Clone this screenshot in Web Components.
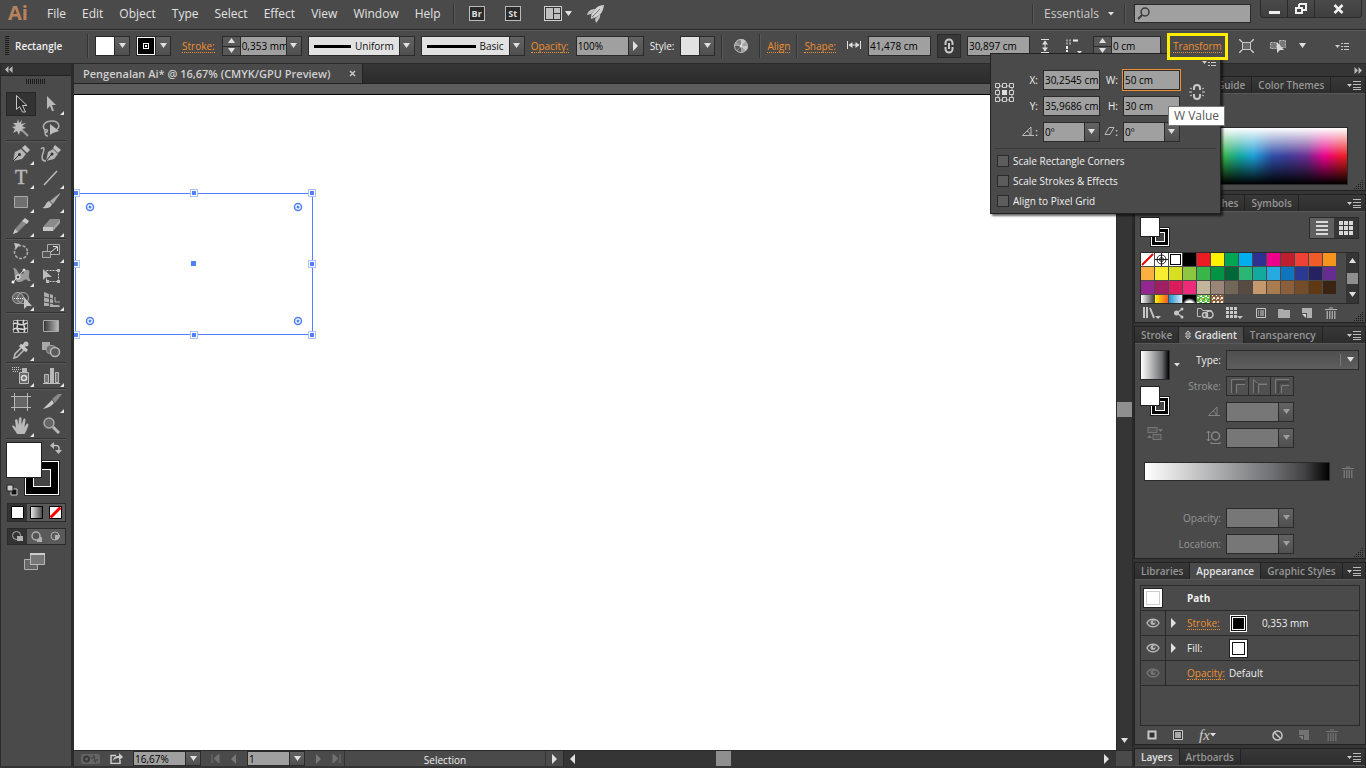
<!DOCTYPE html>
<html lang="en">
<head>
<meta charset="utf-8">
<title>Pengenalan Ai</title>
<style>
    html, body{
        margin: 0;
        height: 100%;
    }
    body{
        --bg: #4a4a4a;
        --edge: #2a2a2a;
        --dark: #353535;
        --field: #a0a0a0;
        --accent: #ee8f30;
        overflow: hidden;
        background: var(--bg);
        color: #f0f0f0;
        font: 10px/14px "Open Sans", "Noto Sans", sans-serif;
    }
</style>
</head>
<body>
<ai-app></ai-app>

<script>
const FLY = '<path d="M28 19v4h-4z" fill="#e6e6e6"/>';

// every icon is [width, height, markup]
const icons = {
    down: [9, 6, '<path d="M1 0h7l-3.500 5z" fill="#e0e0e0"/>'],
    downSmall: [6, 4, '<path d="M0 0h6l-3 3.500z" fill="#e0e0e0"/>'],
    up: [9, 6, '<path d="M1 5h7l-3.500-5z" fill="#e0e0e0"/>'],
    left: [7, 10, '<path d="M6 0v10l-5-5z" fill="#e0e0e0"/>'],
    right: [7, 10, '<path d="M1 0v10l5-5z" fill="#e0e0e0"/>'],
    first: [9, 9, '<path d="M1 0v9M8 0v9l-5-4.500z" fill="#707070" stroke="#707070"/>'],
    last: [9, 9, '<path d="M8 0v9M1 0v9l5-4.500z" fill="#707070" stroke="#707070"/>'],
    menu: [14, 9, '<path d="M0 3h5l-2.500 3z" fill="#ccc"/><path d="M6 .5h8M6 3.500h8M6 6.500h8M6 8.500h8" stroke="#b8b8b8"/>'],
    menuDots: [14, 9, '<path d="M0 3h5l-2.500 3z" fill="#ccc"/><path d="M6 1.500h2M9 1.500h5M6 4.500h2M9 4.500h5M6 7.500h2M9 7.500h5" stroke="#c8c8c8"/>'],
    collapseLeft: [8, 7, '<path d="M3.500 0v7L0 3.500zM7.500 0v7L4 3.500z" fill="#bbb"/>'],
    collapseRight: [8, 7, '<path d="M.5 0v7L4 3.500zM4.500 0v7L8 3.500z" fill="#bbb"/>'],
    grip: [20, 5, '<path d="M0 2.500h20" stroke="#1d1d1d" stroke-width="5" stroke-dasharray="1 1"/>'],
    gripV: [4, 20, '<path d="M2 0v20" stroke="#1d1d1d" stroke-width="4" stroke-dasharray="1 1"/>'],
    resize: [10, 9, '<path d="M8.500 0v9M6.500 2v7M4.500 4v5M2.500 6v3M.5 8v1" stroke="#1a1a1a" stroke-dasharray="1 1"/>'],
    diamond: [6, 10, '<path d="M.5 4L3 1l2.500 3zM.5 6L3 9l2.500-3z" fill="none" stroke="#d0d0d0"/>'],
    close: [7, 7, '<path d="M1 1l5 5M6 1l-5 5" stroke="#c8c8c8" stroke-width="1.500"/>'],

    arrange: [18, 15, '<rect x=".5" y=".5" width="17" height="14" fill="#333" stroke="#d0d0d0"/><path d="M2 2h7v11H2zM10 2h6v5h-6zM10 8h6v5h-6z" fill="#bfbfbf"/>'],
    rocket: [18, 18, '<path d="M17 0C11 0 7 4 4 10l3 3c6-2 9-6 10-13z" fill="#cfcfcf"/><path d="M8 4C4 4 1 6 0 10l4-1zM13 9c1 2-1 6-4 9l-1-4zM4 10l3 3-3 1z" fill="#c3c3c3"/><path d="M5 12L13 4" stroke="#777"/>'],
    search: [13, 13, '<circle cx="8" cy="5" r="4" fill="none" stroke="#3c3c3c" stroke-width="1.500"/><path d="M5 8L1 12" stroke="#3c3c3c" stroke-width="2"/>'],
    min: [11, 12, '<path d="M0 9.500h11" stroke="#eee" stroke-width="3"/>'],
    restore: [12, 12, '<path d="M4 1h7v6H8M4 1v3" fill="none" stroke="#eee" stroke-width="2"/><path d="M1 5h6v5H1z" fill="none" stroke="#eee" stroke-width="2"/>'],
    quit: [11, 12, '<path d="M1.500 2l8 8M9.500 2l-8 8" stroke="#f2f2f2" stroke-width="2.500"/>'],

    recolor: [14, 14, '<circle cx="7" cy="7" r="6.500" fill="#a0a0a0"/><path d="M7 7V0a7 7 0 0 1 5 2zM7 7h7a7 7 0 0 1-2 5z" fill="#cacaca"/><path d="M7 7L2 12a7 7 0 0 1-2-5zM7 7v7l-4-1.500z" fill="#5a5a5a"/><path d="M7 7L2 2A7 7 0 0 1 7 0z" fill="#858585"/><circle cx="7" cy="7" r="1.500" fill="#ddd"/><circle cx="7" cy="7" r="6.500" fill="none" stroke="#bdbdbd"/>'],
    width: [14, 10, '<path d="M.5 1v8M13.500 1v8M2 5h10" stroke="#ddd"/><path d="M1.500 5l4-3v6zM12.500 5l-4-3v6z" fill="#ddd"/>'],
    height: [8, 14, '<path d="M0 .5h8M0 13.500h8M4 2v10" stroke="#ddd"/><path d="M4 1.500l-3 4h6zM4 12.500l-3-4h6z" fill="#ddd"/>'],
    corner: [17, 15, '<path d="M1 1.500h6M1 4.500h6" stroke="#999" stroke-width="2" stroke-dasharray="2 1"/><path d="M8 1.500h5" stroke="#eee" stroke-width="2"/><path d="M2 7v6" stroke="#eee" stroke-width="2" stroke-dasharray="3 1"/><path d="M17 12h-5l2.500 3z" fill="#ddd"/>'],
    link: [10, 16, '<path d="M1.500 7V5a3.500 3.500 0 0 1 7 0v2M1.500 9v2a3.500 3.500 0 0 0 7 0V9" fill="none" stroke="#c9c9c9" stroke-width="2"/><path d="M5 5v6" stroke="#c9c9c9" stroke-width="2"/>'],
    unlink: [16, 18, '<path d="M5 7V5a3 3 0 0 1 6 0v2M5 11v2a3 3 0 0 0 6 0v-2" fill="none" stroke="#c9c9c9" stroke-width="2"/><path d="M0 9h3M13 9h3M1 5l2 1M15 5l-2 1M1 13l2-1M15 13l-2-1" stroke="#c9c9c9"/>'],
    isolate: [15, 14, '<rect x="3.500" y="3.500" width="8" height="7" fill="#666" stroke="#c8c8c8"/><path d="M0 0l3 3M15 0l-3 3M0 14l3-3M15 14l-3-3" stroke="#c8c8c8" stroke-width="1.500"/>'],
    similar: [17, 15, '<path d="M.5 3.500h6v6h-6zM9.500 1.500h6v7h-6z" fill="#777" stroke="#bbb" stroke-dasharray="2 1"/><path d="M7 3v11l3-3h4z" fill="#d8d8d8"/>'],
    refpoint: [20, 20, '<path d="M3 3h14v14H3z" fill="none" stroke="#ccc"/><g fill="#4a4a4a" stroke="#d0d0d0"><path d="M.5.5h4v4h-4zM7.500.5h4v4h-4zM14.500.5h4v4h-4zM.5 7.500h4v4h-4zM14.500 7.500h4v4h-4zM.5 14.500h4v4h-4zM7.500 14.500h4v4h-4zM14.500 14.500h4v4h-4z"/></g><path d="M7 7h5v5H7z" fill="#ddd"/>'],
    angle: [14, 10, '<path d="M13 9.500H1.500L10 1v8M6 5c2 1 3 2 3 4" fill="none" stroke="#bbb"/>'],
    shear: [11, 10, '<path d="M1 8.500L5 1.500h5L6 8.500z" fill="none" stroke="#bbb"/>'],
    aspect: [15, 14, '<path d="M2.500 1v10M.5 3l2-2 2 2M.5 9l2 2 2-2M5 13.500h9M5 12v2M14 12v2" fill="none" stroke="#888"/><ellipse cx="9.500" cy="6" rx="4" ry="4" fill="none" stroke="#888" stroke-width="1.500"/>'],

    library: [18, 12, '<path d="M1 0v11M4 0v11M7 1l4 10" stroke="#c4c4c4" stroke-width="2"/><path d="M12 9h6l-3 3z" fill="#c4c4c4"/>'],
    share: [12, 12, '<path d="M9 2L4 6l5 4" fill="none" stroke="#bbb" stroke-width="1.500"/><circle cx="3.500" cy="6" r="2.500" fill="#c4c4c4"/><circle cx="9" cy="2" r="1.500" fill="#c4c4c4"/><circle cx="9" cy="10" r="1.500" fill="#c4c4c4"/>'],
    ccFolder: [17, 12, '<path d="M4 9.500H.5v-8h4l1 2h9V5" fill="none" stroke="#bbb"/><circle cx="8" cy="8" r="2.500" fill="none" stroke="#c4c4c4" stroke-width="1.500"/><circle cx="12.500" cy="7.500" r="3.500" fill="none" stroke="#c4c4c4" stroke-width="1.500"/>'],
    kinds: [17, 12, '<path d="M0 1.500h11M0 5.500h11M0 9.500h11" stroke="#c8c8c8" stroke-width="3" stroke-dasharray="3 1"/><path d="M11 9h6l-3 3z" fill="#c4c4c4"/>'],
    options: [10, 12, '<path d="M.5 1.500h9v9h-9z" fill="none" stroke="#c4c4c4"/><path d="M2 4h1M4 4h4M2 6h1M4 6h4M2 8h1M4 8h4" stroke="#ccc"/>'],
    folder: [12, 10, '<path d="M0 1h5l1 1h6v8H0z" fill="#ababab"/>'],
    fresh: [11, 10, '<path d="M0 0h10v10H5V5H0z" fill="#b0b0b0"/><path d="M0 6h4v4z" fill="#d8d8d8"/>'],
    trash: [12, 12, '<path d="M0 2.500h12M4 1h4" stroke="#b0b0b0"/><path d="M1.500 4h9v8h-9z" fill="#a0a0a0"/><path d="M3.500 4v8M6 4v8M8.500 4v8" stroke="#444"/>'],
    listView: [12, 16, '<path d="M0 2h12M0 6h12M0 10h12M0 14h12" stroke="#d8d8d8" stroke-width="2"/>'],
    gridView: [15, 14, '<path d="M0 2h14M0 7h14M0 12h14" stroke="#d8d8d8" stroke-width="4" stroke-dasharray="4 1"/>'],
    reverse: [16, 13, '<rect x="1" y=".5" width="9" height="5" fill="#555" stroke="#777"/><rect x="6" y="7.500" width="8" height="5" fill="#555" stroke="#777"/><path d="M11 2h5l-2.500 3zM0 11h5l-2.500-3z" fill="#777"/>'],
    strokeWithin: [14, 14, '<path d="M.5 14V.5H14" fill="none" stroke="#777"/><path d="M3 14V3h11" fill="none" stroke="#444" stroke-width="3"/><path d="M5.500 14V5.500H14" fill="none" stroke="#7c7c7c"/>'],
    strokeAlong: [14, 14, '<path d="M.5 14V.5L5 5h9" fill="none" stroke="#777"/><path d="M3 14V4" stroke="#444" stroke-width="3"/><path d="M5.500 14V5.500H14" fill="none" stroke="#7c7c7c"/>'],
    strokeAcross: [14, 14, '<path d="M.5 14V.5H14M6.500 14V6.500H14" fill="none" stroke="#7a7a7a"/><path d="M3.500 14V3.500H14" fill="none" stroke="#3e3e3e" stroke-width="2"/>'],
    eye: [14, 10, '<path d="M1 5c2.500-5 9.500-5 12 0-2.500 5-9.500 5-12 0z" fill="none" stroke="#b5b5b5" stroke-width="1.500"/><circle cx="7" cy="4.500" r="2.500" fill="#b5b5b5"/><circle cx="8" cy="4" r="1" fill="#444"/>'],
    newStroke: [10, 10, '<path d="M1.500 1.500h7v7h-7z" fill="#333" stroke="#c8c8c8" stroke-width="2"/>'],
    newFill: [10, 10, '<path d="M.5.500h9v9h-9z" fill="#333" stroke="#c8c8c8"/><path d="M2 2h6v6H2z" fill="#aaa"/>'],
    clear: [11, 11, '<circle cx="5.500" cy="5.500" r="4.500" fill="none" stroke="#c8c8c8" stroke-width="1.500"/><path d="M2 2l7 7" stroke="#c8c8c8" stroke-width="1.500"/>'],
    sync: [19, 10, '<rect width="19" height="10" rx="2" fill="#646464"/><circle cx="5.500" cy="5" r="2.500" fill="none" stroke="#383838" stroke-width="2"/><path d="M10 4h4l-2-3M17 6h-4l2 3" fill="none" stroke="#383838"/>'],
    export: [13, 11, '<path d="M6 2.500H1v8h9V7" fill="none" stroke="#ccc" stroke-width="1.500"/><path d="M3 8c0-3 2-5 6-5V0l4 4-4 3.500V5C6 5 4 6 3 8z" fill="#ccc"/>'],

    // toolbox, drawn on the 30x24 cell
    selection: [30, 24, '<path d="M10.500 3.500v14l3-3 3 5.500h3l-3-6.500h4.500z" fill="#2d2d2d" stroke="#c4c4c4"/>'],
    direct: [30, 24, '<path d="M11 4v13l3-3 2 5h2l-2-6h4z" fill="#b8b8b8"/>' + FLY],
    wand: [30, 24, '<path d="M12 3l1 4 3-3-1 4 5-1-4 3 4 2-4 1 2 3-4-1-1 4-2-4-4 2 2-4-3-2 4-1-3-3 4 0z" fill="#bcbcbc"/><path d="M16 14l6 6" stroke="#a0a0a0" stroke-width="2"/>'],
    lasso: [30, 24, '<path d="M9 14c-4-4 0-9 7-9 8 0 9 8 3 9M9 14c3-2 3 3 1 2s-1-2-1 0 1 4 3 4" fill="none" stroke="#b0b0b0" stroke-width="1.500"/><path d="M14 8v11l3-2 6-2z" fill="#bdbdbd"/>'],
    pen: [30, 24, '<path d="M7 19l2-9 6-3 5 5-4 5z" fill="#b4b4b4"/><path d="M16 6l3-3 5 5-3 3z" fill="#c0c0c0"/><path d="M7 19l6-6" stroke="#333"/><circle cx="13.500" cy="12.500" r="1.500" fill="#333"/>' + FLY],
    curvature: [30, 24, '<path d="M10 19l2-9 5-3 5 5-4 5z" fill="#b4b4b4"/><path d="M17 6l2-3 6 5-3 3z" fill="#c0c0c0"/><path d="M10 19l5-6" stroke="#333"/><circle cx="16" cy="12" r="1.500" fill="#333"/><path d="M5 7c3-3 4 0 2 4-2 5-1 8 3 8" fill="none" stroke="#b4b4b4" stroke-width="1.500"/>'],
    type: [30, 24, '<text x="9" y="18" font-family="Liberation Serif, serif" font-size="20" fill="#b8b8b8" stroke="#b8b8b8" stroke-width=".5">T</text>' + FLY],
    line: [30, 24, '<path d="M8 19L21 5" stroke="#bbb" stroke-width="1.500"/>' + FLY],
    rect: [30, 24, '<path d="M8.500 6.500h13v11h-13z" fill="#707070" stroke="#a8a8a8"/>' + FLY],
    brush: [30, 24, '<path d="M24 3l-10 8 3 3 7-10z" fill="#a8a8a8"/><path d="M13 11l3 3c-1 4-5 5-10 4 4-1 3-5 7-7z" fill="#c0c0c0"/>' + FLY],
    pencil: [30, 24, '<path d="M7 20l2-5 8-9 4 3-9 9z" fill="#888"/><path d="M7 20l2-5 3 3zM16 7l3-3 4 3-2 3z" fill="#c8c8c8"/>' + FLY],
    eraser: [30, 24, '<path d="M7 13l7-8h10l-7 8z" fill="#8b8b8b"/><path d="M7 13h10v4H7z" fill="#c4c4c4"/><path d="M17 13l7-8v4l-7 8z" fill="#a0a0a0"/>' + FLY],
    rotate: [30, 24, '<circle cx="15" cy="12" r="6.500" fill="none" stroke="#b0b0b0" stroke-width="1.500" stroke-dasharray="3 1.500"/><path d="M8 3l6 1-4 5z" fill="#c4c4c4"/>' + FLY],
    scale: [30, 24, '<path d="M11.500 4.500h12v10h-12z" fill="none" stroke="#aaa"/><path d="M6.500 11.500h8v6h-8z" fill="#555" stroke="#aaa"/><path d="M15 12l6-5M17 6.500h4.500V11" fill="none" stroke="#ddd"/>' + FLY],
    warp: [30, 24, '<path d="M7 4c5-1 4 7 9 6 3-1 2-5 6-4 4 2-2 5 3 11h-3c-3-4-4 1-9 1-6 0-3-10-6-14z" fill="#9a9a9a"/><path d="M7 18L18 6" stroke="#ddd"/><circle cx="12" cy="13" r="2" fill="#444" stroke="#fff"/><circle cx="7" cy="18" r="1.500" fill="#fff"/><circle cx="18" cy="6" r="1.500" fill="#ddd"/>' + FLY],
    free: [30, 24, '<path d="M10.500 6.500h12v11h-12z" fill="none" stroke="#c8c8c8" stroke-dasharray="2 1"/><path d="M7 5v11l3-3h6z" fill="#bdbdbd"/><path d="M21 5h3v3h-3zM21 16h3v3h-3zM10 16h3v3h-3z" fill="#bdbdbd"/>'],
    builder: [30, 24, '<circle cx="12" cy="10" r="5.500" fill="#666" stroke="#aaa"/><circle cx="17" cy="10" r="5.500" fill="none" stroke="#aaa"/><path d="M8 10.500h10" stroke="#fff" stroke-dasharray="1 1"/><path d="M18 9v12l3-3h5z" fill="#c4c4c4"/>' + FLY],
    perspective: [30, 24, '<path d="M8 4l5 2v12H8zM14 6l3 1v10h6l1 2H14z" fill="#adadad"/><path d="M8 9l9 2M8 14l11 2M18 8v7h6" fill="none" stroke="#4a4a4a"/><path d="M19 9v5h5" fill="none" stroke="#adadad"/>' + FLY],
    mesh: [30, 24, '<path d="M7.500 6.500h14v12h-14z" fill="#333" stroke="#a8a8a8"/><path d="M7 10c5-3 6 4 14-1M7 16c4-5 8 2 14-2M11 6c3 4-3 8 2 12M18 6c-3 4 3 7 0 12" fill="none" stroke="#d8d8d8" stroke-width="1.500"/>'],
    gradient: [30, 24, '<defs><linearGradient id="g"><stop stop-color="#333"/><stop offset="1" stop-color="#bbb"/></linearGradient></defs><path d="M7.500 6.500h15v11h-15z" fill="url(#g)" stroke="#a8a8a8"/>'],
    dropper: [30, 24, '<path d="M8 20l1-4 7-7 2 3-7 7z" fill="none" stroke="#bbb" stroke-width="1.500"/><path d="M14 7l7 6M16 9l5-4" stroke="#c8c8c8" stroke-width="3"/><circle cx="20" cy="6" r="2.500" fill="#c0c0c0"/>' + FLY],
    blend: [30, 24, '<path d="M6 4h8v8H6z" fill="#a8a8a8"/><rect x="10.500" y="7.500" width="9" height="8" rx="3" fill="#707070" stroke="#a0a0a0"/><circle cx="19" cy="14" r="4.500" fill="#5a5a5a" stroke="#b8b8b8" stroke-width="1.500"/>'],
    spray: [30, 24, '<path d="M13.500 8.500h9v11h-9z" fill="#686868" stroke="#b8b8b8"/><path d="M16 4h5v4h-5z" fill="#b8b8b8"/><circle cx="18" cy="14" r="2.500" fill="none" stroke="#ddd" stroke-width="1.500"/><path d="M6 5.500h9M7 7.500h6M6 3.500h7" stroke="#ccc" stroke-dasharray="1 1"/>' + FLY],
    graph: [30, 24, '<path d="M7 19.500h17" stroke="#c0c0c0"/><path d="M8.500 10.500h4v8h-4z" fill="#777" stroke="#b8b8b8"/><path d="M14 4h4v15h-4z" fill="#b8b8b8"/><path d="M19.500 8.500h3v10h-3z" fill="#777" stroke="#b8b8b8"/>' + FLY],
    artboard: [30, 24, '<path d="M9 7h12v10H9z" fill="#666"/><path d="M5 6.500h20M5 17.500h20M8.500 3v18M21.500 3v18" stroke="#b8b8b8"/>'],
    slice: [30, 24, '<path d="M16 9l6-5h4l-7 9z" fill="#888"/><path d="M7 19l9-9 2 3c-2 3-6 5-11 6z" fill="#c8c8c8"/>' + FLY],
    hand: [30, 24, '<path d="M11 20c-1-3-4-5-5-8 1-1 3 0 4 2l-1-8c1-1 2-1 2.500 0l1 5 .5-7c1-1 2-1 2.500 0v7l2-6c1-1 2 0 2 1l-1 7 2-3c1-1 2 0 2 1-1 3-2 6-4 9z" fill="#b8b8b8"/>' + FLY],
    zoom: [30, 24, '<circle cx="13" cy="9" r="5" fill="#666" stroke="#a8a8a8" stroke-width="1.500"/><path d="M17 13l6 6" stroke="#b8b8b8" stroke-width="3"/>'],
    swap: [12, 12, '<path d="M3 3.500h3c2 0 3 1 3 3V9" fill="none" stroke="#bbb" stroke-width="1.500"/><path d="M4 0v7L0 3.500zM5 8h7l-3.500 4z" fill="#bbb"/>'],
    defaults: [12, 12, '<path d="M5 5h6v6H5z" fill="#111" stroke="#ccc"/><path d="M1 1h6v6H1z" fill="#ccc" stroke="#222"/>'],
    modeColor: [13, 13, '<path d="M.5.500h12v12H.5z" fill="#fff" stroke="#000"/>'],
    modeGradient: [13, 13, '<defs><linearGradient id="g"><stop stop-color="#eee"/><stop offset="1" stop-color="#444"/></linearGradient></defs><path d="M.5.500h12v12H.5z" fill="url(#g)" stroke="#000"/>'],
    modeNone: [13, 13, '<path d="M.5.500h12v12H.5z" fill="#fff" stroke="#000"/><path d="M1.500 11.500l10-10" stroke="#f00" stroke-width="3"/>'],
    drawNormal: [11, 11, '<circle cx="4.500" cy="4.500" r="4" fill="none" stroke="#b0b0b0"/><path d="M5 5h6v5H5z" fill="#b0b0b0"/>'],
    drawBehind: [11, 11, '<path d="M6 6h5v5H6z" fill="#b0b0b0"/><circle cx="5" cy="5" r="4" fill="#555" stroke="#b0b0b0" stroke-width="1.500"/>'],
    drawInside: [11, 11, '<circle cx="5" cy="5" r="4" fill="none" stroke="#b0b0b0"/><path d="M5 4h5c0 3-2 5-5 5z" fill="#b0b0b0"/>'],
    screen: [22, 17, '<path d="M.5 6.500h13v10H.5z" fill="#666" stroke="#b0b0b0"/><path d="M6.500 1.500h14v10h-14z" fill="#777" stroke="#b8b8b8"/><path d="M6 1h15" stroke="#ccc" stroke-width="2"/>']
};

class UiIcon extends HTMLElement {
    constructor() {
        super();
        this.attachShadow({mode: 'open'});
    }

    connectedCallback() {
        const [w, h, body] = icons[this.getAttribute('name')];
        this.shadowRoot.innerHTML = `
            <style>
                :host{ display: inline-block; flex: none; }
                svg{ display: block; }
            </style>
            <svg width="${w}" height="${h}" viewBox="0 0 ${w} ${h}" aria-hidden="true">${body}</svg>
        `;
    }
}
customElements.define('ui-icon', UiIcon);

const buttonReset = `
    button{
        margin: 0;
        padding: 0;
        border: 0;
        background: none;
        color: inherit;
        font: inherit;
        display: flex;
        align-items: center;
        justify-content: center;
    }
    .link{
        color: var(--accent);
        border-bottom: 1px dotted var(--accent);
        line-height: 12px;
    }
`;

// text box with a slotted label, and a spinner or an arrow when asked for
class UiField extends HTMLElement {
    constructor() {
        super();
        this.attachShadow({mode: 'open'});
    }

    connectedCallback() {
        const has = name => this.hasAttribute(name);
        const off = has('disabled') ? 'disabled' : '';
        const name = this.getAttribute('name') || 'Value';
        const spin = `<span class="spin">
            <button aria-label="Increase"><ui-icon name="up"></ui-icon></button>
            <button aria-label="Decrease"><ui-icon name="down"></ui-icon></button>
        </span>`;
        const arrow = `<button class="arrow" aria-label="${name} presets" ${off}><ui-icon name="${this.getAttribute('arrow')}"></ui-icon></button>`;
        this.shadowRoot.innerHTML = `
            <style>
                ${buttonReset}
                :host{ display: flex; align-items: center; gap: var(--label-gap, 7px); flex: none; }
                :host([nolabel]) label{ display: none; }
                label{
                    width: var(--label, auto);
                    display: flex;
                    justify-content: flex-end;
                    white-space: nowrap;
                }
                :host([link]) label span{
                    color: var(--accent);
                    border-bottom: 1px dotted var(--accent);
                    line-height: 12px;
                }
                :host([disabled]) label{ color: #969696; }
                .box{
                    display: flex;
                    box-sizing: border-box;
                    width: var(--w, 57px);
                    height: var(--h, 20px);
                    border: 1px solid var(--edge);
                    background: var(--field);
                }
                :host([active]) .box{ outline: 1px solid var(--accent); }
                input{
                    flex: 1;
                    min-width: 0;
                    width: 0;
                    margin: 0;
                    padding: 0 0 0 1px;
                    border: 0;
                    background: none;
                    color: #000;
                    font: inherit;
                    outline: none;
                }
                :host([disabled]) .box{ background: #777; }
                .arrow{
                    width: 15px;
                    border-left: 1px solid var(--edge);
                    background: linear-gradient(#626262, #505050);
                }
                :host([disabled]) .arrow ui-icon{ opacity: .5; }
                .spin{
                    width: 17px;
                    display: grid;
                    border-right: 1px solid var(--edge);
                    background: var(--edge);
                    gap: 1px;
                }
                .spin button{ background: #585858; min-height: 0; overflow: hidden; }
            </style>
            <label for="in"><span><slot>${name}</slot></span></label>
            <span class="box">
                ${has('spin') ? spin : ''}
                <input id="in" type="text" aria-label="${name}" value="${this.getAttribute('value') || ''}" ${off}>
                ${has('arrow') ? arrow : ''}
            </span>
        `;
    }
}
customElements.define('ui-field', UiField);

class UiCheck extends HTMLElement {
    constructor() {
        super();
        this.attachShadow({mode: 'open'}).innerHTML = `
            <style>
                :host{ display: block; }
                label{ display: flex; align-items: center; gap: 4px; height: 20px; }
                input{
                    appearance: none;
                    box-sizing: border-box;
                    width: 12px;
                    height: 12px;
                    margin: 0;
                    border: 1px solid var(--edge);
                    background: #5c5c5c;
                }
            </style>
            <label><input type="checkbox"><slot></slot></label>
        `;
    }
}
customElements.define('ui-check', UiCheck);

// overlapping fill and stroke squares
class FillStroke extends HTMLElement {
    constructor() {
        super();
        this.attachShadow({mode: 'open'});
    }

    connectedCallback() {
        const box = Number(this.getAttribute('box')),
              off = Number(this.getAttribute('offset')),
              ring = box > 30 ? 10 : 6,
              size = box + off,
              hole = box - ring * 2;
        this.shadowRoot.innerHTML = `
            <style>:host{ display: block; } svg{ display: block; }</style>
            <svg width="${size}" height="${size}" role="img" aria-label="Fill and stroke">
                <rect x="${off}" y="${off}" width="${box}" height="${box}" fill="#222"/>
                <rect x="${off + 1}" y="${off + 1}" width="${box - 2}" height="${box - 2}" fill="#fff"/>
                <rect x="${off + 2}" y="${off + 2}" width="${box - 4}" height="${box - 4}" fill="#000"/>
                <rect x="${off + ring - 1}" y="${off + ring - 1}" width="${hole + 2}" height="${hole + 2}" fill="#fff"/>
                <rect x="${off + ring}" y="${off + ring}" width="${hole}" height="${hole}" fill="#444"/>
                <rect x="0.5" y="0.5" width="${box - 1}" height="${box - 1}" fill="#fff" stroke="#222"/>
            </svg>
        `;
    }
}
customElements.define('fill-stroke', FillStroke);

class MenuBar extends HTMLElement {
    constructor() {
        super();
        const items = ['File', 'Edit', 'Object', 'Type', 'Select', 'Effect', 'View', 'Window', 'Help'];
        this.attachShadow({mode: 'open'}).innerHTML = `
            <style>
                ${buttonReset}
                :host{
                    display: flex;
                    height: 29px;
                    border-bottom: 1px solid var(--edge);
                    color: #e2e2e2;
                    font-size: 12px;
                    line-height: 28px;
                }
                .logo{ width: 39px; padding-left: 8px; box-sizing: border-box; color: #b9825f; font: bold 20px/26px "Open Sans", sans-serif; }
                nav{ display: flex; margin-right: 4px; }
                nav button{ padding: 0 8px; line-height: 28px; height: 28px; }
                .bar{ width: 1px; height: 20px; margin-top: 4px; background: #333; border-right: 1px solid #5a5a5a; }
                .apps{ display: flex; align-items: center; gap: 20px; padding: 0 14px; height: 27px; }
                .app{
                    width: 16px;
                    height: 15px;
                    box-sizing: border-box;
                    border: 1px solid #bbb;
                    background: #2b2b2b;
                    color: #ddd;
                    font: bold 9px/13px "Open Sans", sans-serif;
                }
                .arrange{ gap: 2px; margin-left: 3px; }
                .rocket{ margin-left: -6px; }
                .space{ flex: 1; }
                .work{ display: flex; align-items: center; height: 27px; padding: 0 10px; gap: 4px; color: #ccc; }
                .work select{ appearance: none; border: 0; padding: 0; margin: 0; background: none; color: inherit; font: inherit; line-height: 16px; width: 60px; }
                .search{
                    display: flex;
                    align-items: center;
                    box-sizing: border-box;
                    width: 117px;
                    height: 19px;
                    margin: 4px 9px 0 8px;
                    padding-left: 2px;
                    border: 1px solid var(--edge);
                    background: var(--field);
                }
                .search input{ flex: 1; min-width: 0; border: 0; background: none; padding: 0 3px; font: inherit; }
                .win{ display: flex; height: 18px; margin-right: 4px; border: 1px solid var(--edge); border-top: 0; border-radius: 0 0 4px 4px; box-sizing: border-box; background: linear-gradient(#4a4a4a, #3f3f3f); }
                .win button{ width: 27px; border-right: 1px solid var(--edge); }
                .win button:last-child{ width: 46px; border: 0; }
            </style>
            <div class="logo">Ai</div>
            <nav>${items.map(item => `<button>${item}</button>`).join('')}</nav>
            <span class="bar"></span>
            <div class="apps">
                <button class="app">Br</button>
                <button class="app">St</button>
                <button class="arrange" aria-label="Arrange documents"><ui-icon name="arrange"></ui-icon><ui-icon name="down"></ui-icon></button>
                <button class="rocket" aria-label="GPU performance"><ui-icon name="rocket"></ui-icon></button>
            </div>
            <span class="space"></span>
            <span class="bar"></span>
            <div class="work">
                <select aria-label="Workspace"><option>Essentials</option></select>
                <ui-icon name="downSmall"></ui-icon>
            </div>
            <span class="bar"></span>
            <label class="search"><ui-icon name="search"></ui-icon><input type="search" aria-label="Search"></label>
            <div class="win">
                <button aria-label="Minimize"><ui-icon name="min"></ui-icon></button>
                <button aria-label="Restore"><ui-icon name="restore"></ui-icon></button>
                <button aria-label="Close"><ui-icon name="quit"></ui-icon></button>
            </div>
        `;
    }
}
customElements.define('menu-bar', MenuBar);

class TransformPopover extends HTMLElement {
    constructor() {
        super();
        this.attachShadow({mode: 'open'}).innerHTML = `
            <style>
                :host{
                    display: block;
                    box-sizing: border-box;
                    width: 231px;
                    padding: 16px 4px 0;
                    border: 1px solid #222;
                    background: var(--bg);
                    box-shadow: 2px 2px 2px rgba(0, 0, 0, .6);
                }
                .grid{ display: flex; gap: 5px; padding-bottom: 6px; border-bottom: 1px solid #3a3a3a; }
                .ref{ padding-top: 13px; }
                .col{ display: grid; gap: 6px; }
                .first{ --label: 18px; --label-gap: 5px; }
                .second{ --label: 13px; --label-gap: 5px; }
                .chain{ padding: 13px 0 0 4px; }
                .checks{ padding: 2px; }
                .menu{ position: absolute; right: 4px; top: 4px; }
                .tip{
                    position: absolute;
                    left: 177px;
                    top: 52px;
                    padding: 0 5px;
                    border: 1px solid #767676;
                    background: #fff;
                    color: #575757;
                    font-size: 12px;
                    line-height: 18px;
                    white-space: nowrap;
                }
            </style>
            <ui-icon class="menu" name="menuDots"></ui-icon>
            <div class="grid">
                <div class="ref"><ui-icon name="refpoint"></ui-icon></div>
                <div class="col first">
                    <ui-field name="X" value="30,2545 cm">X:</ui-field>
                    <ui-field name="Y" value="35,9686 cm">Y:</ui-field>
                    <ui-field name="Rotate" value="0º" arrow="down"><ui-icon name="angle"></ui-icon>:</ui-field>
                </div>
                <div class="col second">
                    <ui-field name="W" value="50 cm" active>W:</ui-field>
                    <ui-field name="H" value="30 cm">H:</ui-field>
                    <ui-field name="Shear" value="0º" arrow="down"><ui-icon name="shear"></ui-icon>:</ui-field>
                </div>
                <div class="chain"><ui-icon name="unlink"></ui-icon></div>
            </div>
            <div class="checks">
                <ui-check>Scale Rectangle Corners</ui-check>
                <ui-check>Scale Strokes &amp; Effects</ui-check>
                <ui-check>Align to Pixel Grid</ui-check>
            </div>
            <div class="tip" role="tooltip">W Value</div>
        `;
    }
}
customElements.define('transform-popover', TransformPopover);

class ControlBar extends HTMLElement {
    constructor() {
        super();
        this.attachShadow({mode: 'open'}).innerHTML = `
            <style>
                ${buttonReset}
                :host{
                    display: flex;
                    align-items: center;
                    gap: 6px;
                    height: 33px;
                    padding: 0 17px 2px 5px;
                    border-top: 1px solid #5c5c5c;
                    box-sizing: border-box;
                    position: relative;
                    z-index: 2;
                }
                .kind{ width: 66px; font-weight: 600; }
                .bar{ width: 1px; height: 24px; background: #333; border-right: 1px solid #575757; flex: none; }
                .pick{
                    align-items: stretch;
                    height: 20px;
                    box-sizing: border-box;
                    border: 1px solid var(--edge);
                    flex: none;
                }
                .pick .arrow{ width: 14px; border-left: 1px solid var(--edge); background: linear-gradient(#626262, #505050); display: grid; place-items: center; }
                .chip{ width: 18px; background: #fff; }
                .ring{ background: #000; display: grid; place-items: center; box-shadow: inset 0 0 0 1px #fff; }
                .ring::before{ content: ''; width: 2px; height: 2px; background: #fff; border: 1px solid #000; outline: 1px solid #fff; }
                .grey{ background: #e2e2e2; }
                .line{
                    display: flex;
                    align-items: center;
                    gap: 4px;
                    width: 90px;
                    box-sizing: border-box;
                    padding: 0 5px;
                    background: #e2e2e2;
                    color: #111;
                }
                .brush{ width: 87px; }
                .line i{ flex: 1; height: 3px; background: #000; }
                .gap{ margin-left: 5px; }
                .chainlink{ width: 24px; height: 24px; border: 1px solid var(--edge); box-sizing: border-box; background: #393939; flex: none; }
                .icon{ margin: 0 5px; }
                .tr{ position: relative; flex: none; }
                .tr > button{
                    position: relative;
                    z-index: 2;
                    box-sizing: border-box;
                    width: 61px;
                    height: 27px;
                    border: 3px solid #ffee00;
                    background: var(--bg);
                }
                transform-popover{ position: absolute; right: 7px; top: 20px; z-index: 1; }
                .end{ margin-left: auto; }
            </style>
            <ui-icon name="gripV"></ui-icon>
            <span class="kind">Rectangle</span>
            <span class="bar"></span>
            <button class="pick" aria-label="Fill"><span class="chip"></span><span class="arrow"><ui-icon name="down"></ui-icon></span></button>
            <button class="pick" aria-label="Stroke colour"><span class="chip ring"></span><span class="arrow"><ui-icon name="down"></ui-icon></span></button>
            <ui-field class="gap" link spin arrow="down" name="Stroke" value="0,353 mm" style="--w: 80px">Stroke:</ui-field>
            <button class="pick"><span class="line"><i></i>Uniform</span><span class="arrow"><ui-icon name="down"></ui-icon></span></button>
            <button class="pick"><span class="line brush"><i></i>Basic</span><span class="arrow"><ui-icon name="down"></ui-icon></span></button>
            <ui-field link arrow="right" name="Opacity" value="100%" style="--w: 68px">Opacity:</ui-field>
            <span>Style:</span>
            <button class="pick" aria-label="Graphic style"><span class="chip grey"></span><span class="arrow"><ui-icon name="down"></ui-icon></span></button>
            <span class="bar"></span>
            <button class="icon" aria-label="Recolor artwork"><ui-icon name="recolor"></ui-icon></button>
            <span class="bar"></span>
            <button class="link">Align</button>
            <span class="bar"></span>
            <button class="link">Shape:</button>
            <ui-field class="gap" name="Width" value="41,478 cm" style="--w: 63px"><ui-icon name="width"></ui-icon></ui-field>
            <button class="chainlink" aria-label="Link width and height"><ui-icon name="link"></ui-icon></button>
            <ui-field nolabel name="Height" value="30,897 cm" style="--w: 63px"></ui-field>
            <ui-icon class="icon" name="height"></ui-icon>
            <ui-icon class="icon" name="corner"></ui-icon>
            <ui-field nolabel spin name="Corner radius" value="0 cm" style="--w: 68px"></ui-field>
            <div class="tr">
                <button><span class="link">Transform</span></button>
                <transform-popover></transform-popover>
            </div>
            <button class="icon" aria-label="Isolate"><ui-icon name="isolate"></ui-icon></button>
            <button class="icon" aria-label="Select similar"><ui-icon name="similar"></ui-icon></button>
            <ui-icon name="down"></ui-icon>
            <ui-icon class="end" name="menuDots"></ui-icon>
        `;
    }
}
customElements.define('control-bar', ControlBar);

class ToolBox extends HTMLElement {
    constructor() {
        super();
        const groups = [
            ['selection', 'direct', 'wand', 'lasso'],
            ['pen', 'curvature', 'type', 'line', 'rect', 'brush', 'pencil', 'eraser'],
            ['rotate', 'scale', 'warp', 'free', 'builder', 'perspective'],
            ['mesh', 'gradient', 'dropper', 'blend'],
            ['spray', 'graph'],
            ['artboard', 'slice', 'hand', 'zoom']
        ];
        const tool = name => `<button class="${name}" aria-label="${name}"><ui-icon name="${name}"></ui-icon></button>`;
        const bar = (kind, names) => `<div class="modes ${kind}">${names.map(n => `<button aria-label="${n}"><ui-icon name="${n}"></ui-icon></button>`).join('')}</div>`;
        this.attachShadow({mode: 'open'}).innerHTML = `
            <style>
                ${buttonReset}
                :host{ display: block; box-sizing: border-box; width: 74px; border-left: 1px solid var(--edge); border-right: 3px solid #2b2b2b; background: var(--bg); }
                header{ height: 12px; padding: 0 4px; display: flex; align-items: center; background: #333; border-bottom: 1px solid #222; box-sizing: border-box; }
                .grip{ display: block; padding: 3px 0 8px 25px; }
                .group{ display: grid; grid-template-columns: 30px 30px; margin: 0 5px 1px; border-bottom: 1px solid #333; box-shadow: 0 1px #585858; }
                .group button{ height: 24px; }
                .selection{ background: #333; box-shadow: inset 0 0 0 1px #272727; }
                .colors{ display: grid; grid-template-columns: 44px 1fr; margin: 3px 5px 7px; height: 54px; }
                .colors > *{ grid-row: 1; }
                fill-stroke{ grid-column: 1 / 3; }
                .swap{ grid-column: 2; align-self: start; z-index: 1; }
                .def{ grid-column: 1; align-self: end; z-index: 1; }
                .modes{ display: grid; grid-template-columns: 1fr 1fr 1fr; margin: 0 5px 6px 6px; border: 1px solid var(--edge); background: #5a5a5a; }
                .modes button{ height: 17px; }
                .draw button{ height: 15px; }
                .modes button:first-child{ background: #333; }
                .screen{ padding: 2px 0 0 23px; }
            </style>
            <header><ui-icon name="collapseLeft"></ui-icon></header>
            <ui-icon class="grip" name="grip"></ui-icon>
            ${groups.map(group => `<div class="group">${group.map(tool).join('')}</div>`).join('')}
            <div class="colors">
                <fill-stroke box="36" offset="18"></fill-stroke>
                <ui-icon class="swap" name="swap"></ui-icon>
                <ui-icon class="def" name="defaults"></ui-icon>
            </div>
            ${bar('paint', ['modeColor', 'modeGradient', 'modeNone'])}
            ${bar('draw', ['drawNormal', 'drawBehind', 'drawInside'])}
            <button class="screen" aria-label="Screen mode"><ui-icon name="screen"></ui-icon></button>
        `;
    }
}
customElements.define('tool-box', ToolBox);

class ArtCanvas extends HTMLElement {
    constructor() {
        super();
        const xs = [2, 120, 238],
              ys = [98, 169, 240];
        let handles = '';
        ys.forEach((y, row) => xs.forEach((x, col) => {
            if(row === 1 && col === 1){
                return;
            }
            handles += `<rect x="${x - 3.5}" y="${y - 3.5}" width="7" height="7" fill="#fff" stroke="#a9c1ff"/>
                <rect x="${x - 2}" y="${y - 2}" width="4" height="4" fill="#4f80ff"/>`;
        }));
        const widget = (x, y) => `<circle cx="${x}" cy="${y}" r="3.500" fill="#fff" stroke="#4f80ff" stroke-width="1.500"/><circle cx="${x}" cy="${y}" r="1.500" fill="#4f80ff"/>`;
        this.attachShadow({mode: 'open'}).innerHTML = `
            <style>
                :host{ display: block; background: #fff; overflow: hidden; }
                svg{ display: block; }
            </style>
            <svg width="250" height="250" role="img" aria-label="Selected rectangle">
                <rect x="1.500" y="98.500" width="237" height="141" fill="none" stroke="#4f80ff"/>
                ${handles}
                <rect x="117" y="166" width="5" height="5" fill="#4f80ff"/>
                ${widget(16, 112)}${widget(224, 112)}${widget(16, 226)}${widget(224, 226)}
            </svg>
        `;
    }
}
customElements.define('art-canvas', ArtCanvas);

class StatusBar extends HTMLElement {
    constructor() {
        super();
        this.attachShadow({mode: 'open'}).innerHTML = `
            <style>
                ${buttonReset}
                :host{ display: flex; height: 15px; border-top: 1px solid var(--edge); --h: 15px; }
                :host > *{ flex: none; }
                .left{ display: flex; align-items: center; gap: 10px; width: 271px; box-sizing: border-box; padding-left: 7px; border-right: 1px solid #333; }
                .dim{ opacity: .3; }
                .status{ width: 200px; display: grid; place-items: center; line-height: 18px; }
                .more{ width: 18px; border-left: 1px solid #333; }
                .scroll{ flex: 1; display: flex; align-items: center; background: var(--dark); border-left: 1px solid var(--edge); padding: 0 6px 0 5px; }
                .thumb{ width: 15px; height: 15px; background: #8f8f8f; margin-left: 140px; }
                .scroll ui-icon:last-child{ margin-left: auto; }
                .corner{ width: 16px; border-right: 2px solid var(--edge); }
            </style>
            <div class="left">
                <ui-icon name="sync"></ui-icon>
                <ui-icon name="export"></ui-icon>
                <ui-field nolabel arrow="down" name="Zoom" value="16,67%" style="--w: 68px"></ui-field>
                <ui-icon name="first"></ui-icon>
                <ui-icon class="dim" name="left"></ui-icon>
                <ui-field nolabel arrow="down" name="Artboard" value="1" style="--w: 58px"></ui-field>
                <ui-icon class="dim" name="right"></ui-icon>
                <ui-icon name="last"></ui-icon>
            </div>
            <span class="status">Selection</span>
            <button class="more" aria-label="Status options"><ui-icon name="right"></ui-icon></button>
            <div class="scroll"><ui-icon name="left"></ui-icon><span class="thumb"></span><ui-icon name="right"></ui-icon></div>
            <span class="corner"></span>
        `;
    }
}
customElements.define('status-bar', StatusBar);

class DocWindow extends HTMLElement {
    constructor() {
        super();
        this.attachShadow({mode: 'open'}).innerHTML = `
            <style>
                ${buttonReset}
                :host{ display: flex; flex-direction: column; min-width: 0; }
                .tabs{ height: 20px; display: flex; background: linear-gradient(#363636, #2b2b2b); border-bottom: 1px solid #222; box-sizing: border-box; }
                .tab{ display: flex; align-items: center; justify-content: space-between; width: 289px; box-sizing: border-box; padding: 0 6px 0 9px; background: var(--bg); border-right: 1px solid #222; color: #d0d0d0; font-size: 11px; font-weight: 600; white-space: nowrap; }
                .strip{ height: 10px; background: #5c5c5c; border-bottom: 1px solid #000; }
                .view{ flex: 1; display: flex; min-height: 0; }
                art-canvas{ flex: 1; }
                .scroll{ width: 18px; box-sizing: border-box; border-left: 1px solid var(--edge); border-right: 2px solid var(--edge); background: var(--dark); display: flex; flex-direction: column; align-items: center; }
                .thumb{ width: 15px; height: 15px; margin-top: 307px; background: #8f8f8f; }
                .scroll ui-icon{ margin-top: auto; padding-bottom: 6px; }
            </style>
            <div class="tabs">
                <div class="tab">Pengenalan Ai* @ 16,67% (CMYK/GPU Preview)
                    <button aria-label="Close document"><ui-icon name="close"></ui-icon></button>
                </div>
            </div>
            <div class="strip"></div>
            <div class="view">
                <art-canvas></art-canvas>
                <div class="scroll"><span class="thumb"></span><ui-icon name="down"></ui-icon></div>
            </div>
            <status-bar></status-bar>
        `;
    }
}
customElements.define('doc-window', DocWindow);

// tabs="One|*Two|Three", the star marks the open tab
class DockPanel extends HTMLElement {
    constructor() {
        super();
        this.attachShadow({mode: 'open'});
    }

    connectedCallback() {
        const tabs = this.getAttribute('tabs').split('|').map(tab => {
            const open = tab.startsWith('*');
            const mark = this.hasAttribute('cycle') && open ? '<ui-icon name="diamond"></ui-icon>' : '';
            return `<button role="tab" aria-selected="${open}">${mark}<span>${tab.replace('*', '')}</span></button>`;
        });
        const grip = this.hasAttribute('grip') ? '<ui-icon class="grip" name="resize"></ui-icon>' : '';
        this.shadowRoot.innerHTML = `
            <style>
                ${buttonReset}
                :host{ display: block; position: relative; border: 1px solid #222; margin-bottom: 3px; background: var(--bg); }
                .tabs{ display: flex; height: 16px; background: linear-gradient(#383838, #2d2d2d); }
                .tabs button{
                    flex: none;
                    padding: 0 6px;
                    gap: 3px;
                    border-right: 1px solid #222;
                    color: #969696;
                    font-weight: 600;
                    line-height: 16px;
                    white-space: nowrap;
                }
                .tabs [aria-selected=true]{ background: var(--bg); color: #e2e2e2; }
                .menu{ margin: 4px 4px 0 auto; }
                .grip{ position: absolute; right: 1px; bottom: 1px; }
                section{ border-top: 1px solid #585858; }
            </style>
            <div class="tabs" role="tablist">${tabs.join('')}<ui-icon class="menu" name="menu"></ui-icon></div>
            <section><slot></slot></section>
            ${grip}
        `;
    }
}
customElements.define('dock-panel', DockPanel);

class ColorSpectrum extends HTMLElement {
    constructor() {
        super();
        this.attachShadow({mode: 'open'}).innerHTML = `
            <style>
                :host{ display: block; height: 61px; padding: 33px 17px 2px 8px; }
                div{
                    height: 56px;
                    border: 1px solid var(--edge);
                    background:
                        linear-gradient(#fff, rgba(255, 255, 255, 0) 50%, rgba(0, 0, 0, 0) 50%, #000),
                        linear-gradient(90deg, #ed1c24, #fff200 18%, #39b54a 39%, #12a89d 47%, #1c9fd8 54%, #2e4fa8 63%, #3b3f9c 70%, #6b2d91 80%, #ec008c 89%, #ed1c24 98%);
                }
            </style>
            <div></div>
        `;
    }
}
customElements.define('color-spectrum', ColorSpectrum);

class SwatchPanel extends HTMLElement {
    constructor() {
        super();
        const colors = `000 ed1c24 fff200 00a651 00aeef 2e3192 ec008c be1e2d ef4136 f15a29 f7941e
            fbb040 f9ed32 d7df23 8dc63f 39b54a 009444 006838 2bb673 14a99e 27aae1 0f75bd 2b3990 262262 662d91
            92278f 9e1f63 da1c5c ee2a7b c2b59b 9b8579 726658 594a42 c49a6c a97c50 8b5e3c 754c29 603913 3c2415`.split(/\s+/);
        const special = `
            <button aria-label="None"><svg width="13" height="13"><path d="M0 0h13v13H0z" fill="#fff"/><path d="M1 12L12 1" stroke="#e00" stroke-width="2"/></svg></button>
            <button aria-label="Registration"><svg width="13" height="13"><path d="M0 0h13v13H0z" fill="#fff"/><circle cx="6.500" cy="6.500" r="4.500" fill="none" stroke="#222"/><circle cx="6.500" cy="6.500" r="2" fill="none" stroke="#222"/><path d="M6.500 0v13M0 6.500h13" stroke="#222"/></svg></button>
            <button aria-label="White" style="background: #fff; box-shadow: inset 0 0 0 1px #fff, inset 0 0 0 2px #000"></button>`;
        const fills = [
            'linear-gradient(90deg, #fff, #444)',
            'linear-gradient(90deg, #fff200, #f15a29)',
            'linear-gradient(90deg, #1c8fd0, #d8ecf8)',
            'radial-gradient(circle at 50% 80%, #fff 35%, #000 60%)',
            'repeating-conic-gradient(#8dc63f 0 12%, #fff 0 20%, #39b54a 0 30%) 0 0/5px 5px',
            'repeating-conic-gradient(#8b5e3c 0 30%, #eee 0 45%, #c49a6c 0 60%) 0 0/4px 4px'
        ];
        const foot = ['library', 'share', 'ccFolder', 'kinds', 'options', 'folder', 'fresh', 'trash'];
        this.attachShadow({mode: 'open'}).innerHTML = `
            <style>
                ${buttonReset}
                :host{ display: block; padding: 5px 6px 0 5px; }
                .top{ display: flex; justify-content: space-between; height: 35px; }
                .views{ display: flex; height: 20px; border: 1px solid var(--edge); }
                .views button{ width: 24px; background: #373737; }
                .views button:first-child{ background: #606060; }
                .list{ display: flex; height: 50px; border: 1px solid var(--edge); overflow: hidden; }
                .cells{ display: grid; grid-template-columns: repeat(14, 13px); grid-auto-rows: 13px; gap: 1px; flex: 1; }
                .scroll{ width: 12px; display: flex; flex-direction: column; align-items: center; justify-content: space-between; background: var(--dark); padding: 5px 0; box-sizing: border-box; }
                .scroll i{ width: 11px; height: 11px; background: #8f8f8f; }
                footer{ display: flex; align-items: center; justify-content: space-between; height: 18px; padding: 0 22px 0 3px; }
            </style>
            <div class="top">
                <fill-stroke box="20" offset="10"></fill-stroke>
                <div class="views">
                    <button aria-label="List view"><ui-icon name="listView"></ui-icon></button>
                    <button aria-label="Thumbnail view"><ui-icon name="gridView"></ui-icon></button>
                </div>
            </div>
            <div class="list">
                <div class="cells">
                    ${special}
                    ${colors.map(c => `<button aria-label="#${c}" style="background: #${c}"></button>`).join('')}
                    ${fills.map(f => `<button aria-label="Pattern" style="background: ${f}"></button>`).join('')}
                </div>
                <div class="scroll"><ui-icon name="up"></ui-icon><i></i><ui-icon name="down"></ui-icon></div>
            </div>
            <footer>${foot.map(f => `<button aria-label="${f}"><ui-icon name="${f}"></ui-icon></button>`).join('')}</footer>
        `;
    }
}
customElements.define('swatch-panel', SwatchPanel);

class GradientPanel extends HTMLElement {
    constructor() {
        super();
        this.attachShadow({mode: 'open'}).innerHTML = `
            <style>
                ${buttonReset}
                :host{ display: block; padding: 6px 6px 4px 5px; --label: 38px; --label-gap: 5px; --w: 68px; }
                .top{ display: flex; }
                .side{ width: 43px; display: grid; gap: 6px; align-content: start; flex: none; }
                .now{ display: flex; align-items: center; gap: 4px; }
                .now i{ width: 28px; height: 28px; border: 1px solid var(--edge); background: linear-gradient(90deg, #fff, #6d6e71 75%, #000); }
                .rev{ padding: 5px 0 0 7px; }
                .rows{ flex: 1; display: grid; gap: 6px; }
                .row{ display: flex; align-items: center; gap: 5px; height: 20px; }
                .row > label, .row > span:first-child{ width: 38px; text-align: right; }
                .off{ color: #969696; }
                .drop{ flex: 1; display: grid; align-items: center; }
                .drop > *{ grid-area: 1 / 1; }
                select{ appearance: none; height: 20px; border: 1px solid var(--edge); background: linear-gradient(#4f4f4f, #5e5e5e); }
                .drop ui-icon{ justify-self: end; padding: 3px 4px 3px 5px; border-left: 1px solid #777; pointer-events: none; }
                .seg{ display: flex; border: 1px solid var(--edge); }
                .seg button{ width: 22px; height: 18px; border-right: 1px solid var(--edge); background: #505050; }
                .seg button:last-child{ border: 0; }
                .ramp{ display: flex; align-items: center; justify-content: space-between; padding: 14px 5px 27px 4px; }
                .ramp i{ width: 184px; height: 17px; border: 1px solid var(--edge); background: linear-gradient(90deg, #fff, #6d6e71 70%, #414042 87%, #000); }
                .dim{ opacity: .5; }
                .low{ padding-left: 38px; display: grid; gap: 6px; --label: 43px; }
            </style>
            <div class="top">
                <div class="side">
                    <div class="now"><i></i><ui-icon name="downSmall"></ui-icon></div>
                    <fill-stroke box="20" offset="10"></fill-stroke>
                    <ui-icon class="rev" name="reverse"></ui-icon>
                </div>
                <div class="rows">
                    <div class="row"><label for="type">Type:</label><span class="drop"><select id="type"><option></option><option value="linear">Linear</option></select><ui-icon name="down"></ui-icon></span></div>
                    <div class="row"><span class="off">Stroke:</span><div class="seg">
                        <button aria-label="Within stroke"><ui-icon name="strokeWithin"></ui-icon></button>
                        <button aria-label="Along stroke"><ui-icon name="strokeAlong"></ui-icon></button>
                        <button aria-label="Across stroke"><ui-icon name="strokeAcross"></ui-icon></button>
                    </div></div>
                    <ui-field disabled arrow="down" name="Angle"><ui-icon class="dim" name="angle"></ui-icon></ui-field>
                    <ui-field disabled arrow="down" name="Aspect ratio"><ui-icon name="aspect"></ui-icon></ui-field>
                </div>
            </div>
            <div class="ramp"><i></i><button class="dim" aria-label="Delete stop"><ui-icon name="trash"></ui-icon></button></div>
            <div class="low">
                <ui-field disabled arrow="down" name="Opacity">Opacity:</ui-field>
                <ui-field disabled arrow="down" name="Location">Location:</ui-field>
            </div>
        `;
    }
}
customElements.define('gradient-panel', GradientPanel);

class AppearancePanel extends HTMLElement {
    constructor() {
        super();
        this.attachShadow({mode: 'open'}).innerHTML = `
            <style>
                ${buttonReset}
                :host{ display: block; padding: 5px 5px 0; }
                .list{ height: 139px; border: 1px solid var(--edge); }
                .row{ display: flex; align-items: center; height: 24px; border-bottom: 1px solid var(--edge); }
                .eye{ width: 25px; height: 24px; border-right: 1px solid var(--edge); flex: none; }
                .open{ width: 21px; flex: none; justify-content: start; padding-left: 4px; box-sizing: border-box; }
                .name{ width: 42px; display: flex; flex: none; }
                .thumb{ width: 18px; height: 18px; margin-left: 2px; border: 1px solid #222; background: #fff; box-shadow: inset 0 0 0 2px #fff, inset 0 0 0 3px #ccc; }
                .path{ font-weight: 700; }
                .path .thumb{ margin-right: 24px; }
                .chip{ width: 11px; height: 11px; border: 1px solid #111; outline: 2px solid #fff; box-shadow: 0 0 0 3px #222; margin: 0 17px 0 3px; }
                .chip.stroke{ outline: 1px solid #fff; box-shadow: 0 0 0 2px #111, 0 0 0 3px #fff; width: 9px; height: 9px; margin: 0 18px 0 4px; }
                footer{ display: flex; align-items: center; gap: 16px; height: 18px; padding: 0 22px 0 7px; }
                .fx{ font: italic 15px/16px "Liberation Serif", serif; color: #ccc; }
                .clear{ margin-left: auto; }
                .dim{ opacity: .4; }
            </style>
            <div class="list">
                <div class="row path"><span class="thumb"></span>Path</div>
                <div class="row"><button class="eye" aria-label="Toggle stroke"><ui-icon name="eye"></ui-icon></button><button class="open" aria-label="Expand stroke"><ui-icon name="right"></ui-icon></button><span class="name"><button class="link">Stroke:</button></span><i class="chip stroke" style="background: #000"></i>0,353 mm</div>
                <div class="row"><button class="eye" aria-label="Toggle fill"><ui-icon name="eye"></ui-icon></button><button class="open" aria-label="Expand fill"><ui-icon name="right"></ui-icon></button><span class="name">Fill:</span><i class="chip" style="background: #fff"></i></div>
                <div class="row"><button class="eye" aria-label="Toggle opacity"><ui-icon class="dim" name="eye"></ui-icon></button><span class="open"></span><span class="name"><button class="link">Opacity:</button></span>Default</div>
            </div>
            <footer>
                <button aria-label="Add stroke"><ui-icon name="newStroke"></ui-icon></button>
                <button aria-label="Add fill"><ui-icon name="newFill"></ui-icon></button>
                <button class="fx">fx<ui-icon name="downSmall"></ui-icon></button>
                <button class="clear" aria-label="Clear appearance"><ui-icon name="clear"></ui-icon></button>
                <button class="dim" aria-label="Duplicate"><ui-icon name="fresh"></ui-icon></button>
                <button class="dim" aria-label="Delete"><ui-icon name="trash"></ui-icon></button>
            </footer>
        `;
    }
}
customElements.define('appearance-panel', AppearancePanel);

class PanelDock extends HTMLElement {
    constructor() {
        super();
        this.attachShadow({mode: 'open'}).innerHTML = `
            <style>
                :host{ display: block; box-sizing: border-box; width: 232px; background: #353535; overflow: hidden; }
                header{ height: 12px; display: flex; align-items: center; justify-content: flex-end; padding-right: 4px; }
            </style>
            <header><ui-icon name="collapseRight"></ui-icon></header>
            <dock-panel grip cycle tabs="*Color|Color Guide|Color Themes"><color-spectrum></color-spectrum></dock-panel>
            <dock-panel grip tabs="*Swatches|Brushes|Symbols"><swatch-panel></swatch-panel></dock-panel>
            <dock-panel grip cycle tabs="Stroke|*Gradient|Transparency"><gradient-panel></gradient-panel></dock-panel>
            <dock-panel tabs="Libraries|*Appearance|Graphic Styles"><appearance-panel></appearance-panel></dock-panel>
            <dock-panel tabs="*Layers|Artboards"></dock-panel>
        `;
    }
}
customElements.define('panel-dock', PanelDock);

class AiApp extends HTMLElement {
    constructor() {
        super();
        this.attachShadow({mode: 'open'}).innerHTML = `
            <style>
                :host{ display: flex; flex-direction: column; height: 100vh; }
                main{ flex: 1; display: flex; min-height: 0; border-top: 1px solid var(--edge); }
                doc-window{ flex: 1; }
                footer{ height: 2px; background: #333; }
            </style>
            <menu-bar></menu-bar>
            <control-bar></control-bar>
            <main>
                <tool-box></tool-box>
                <doc-window></doc-window>
                <panel-dock></panel-dock>
            </main>
            <footer></footer>
        `;
    }
}
customElements.define('ai-app', AiApp);
</script>
</body>
</html>
